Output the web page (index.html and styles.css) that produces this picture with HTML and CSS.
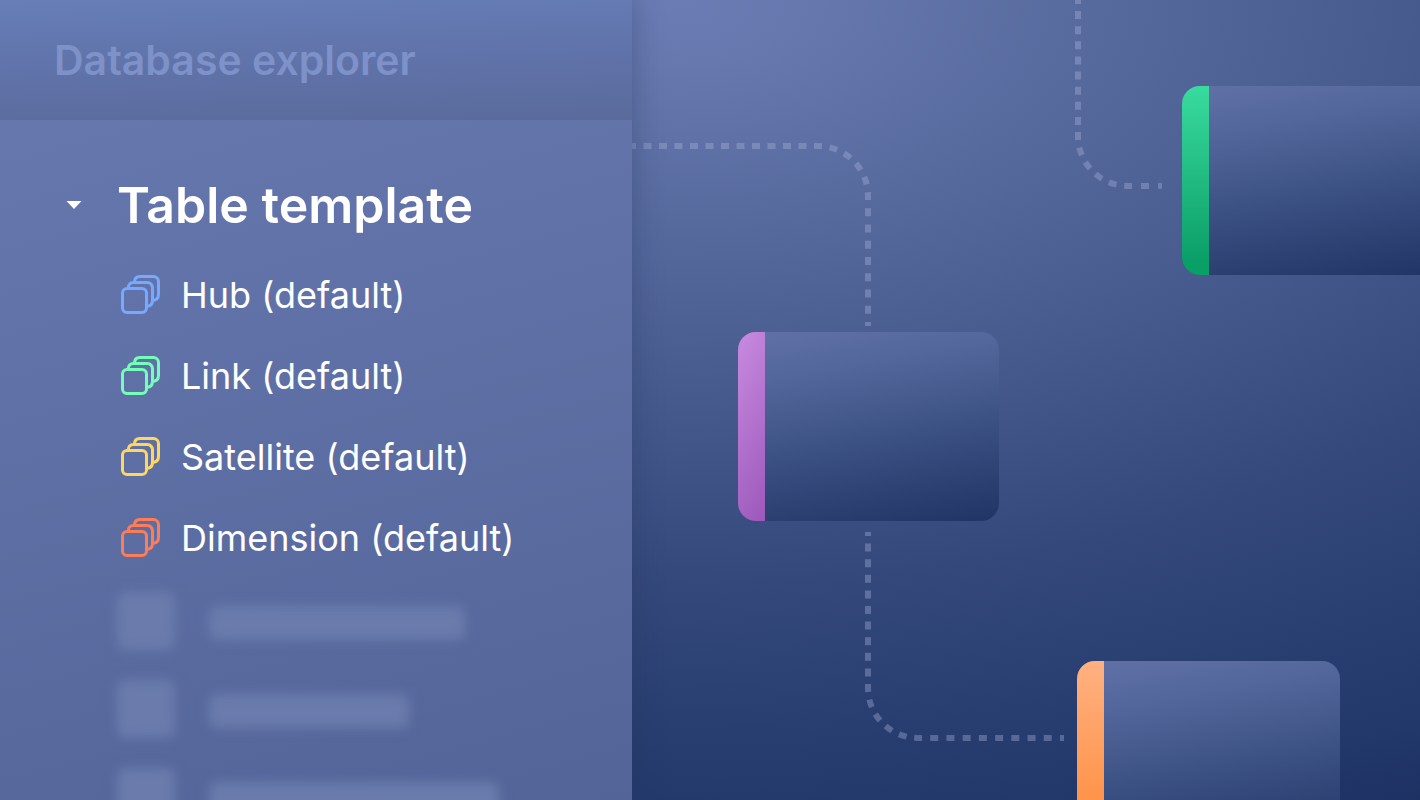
FILE: index.html
```html
<!DOCTYPE html>
<html lang="en">
<head>
<meta charset="utf-8">
<meta name="viewport" content="width=device-width, initial-scale=1">
<title>Database explorer</title>
<link rel="stylesheet" href="styles.css">
</head>
<body>
<svg class="defs" aria-hidden="true">
  <symbol id="stack" viewBox="0 0 40 40">
    <g fill="none" stroke="currentColor" stroke-width="3">
      <rect x="2.5" y="13.5" width="24" height="24" rx="4.5"/>
      <path d="M8.2 13.5C8.2 9.5 10 7.6 13.5 7.6H27.5a5 5 0 0 1 5 5V25.5C32.500 29 30.500 31.200 26.500 31.500"/>
      <path d="M14.400 7.500C14.500 3.500 16.500 1.500 19.800 1.500H33.500a5 5 0 0 1 5 5V19.500C38.500 23 36.500 25.200 32.500 25.500"/>
    </g>
  </symbol>
</svg>
<div class="app">
  <aside class="panel">
    <header class="panel-header">
      <h1 class="panel-title">Database explorer</h1>
    </header>
    <section class="group">
      <h2 class="group-title">
        <button class="group-toggle" type="button" aria-expanded="true">
          <svg class="caret" viewBox="0 0 16 8" aria-hidden="true"><path d="M0.500 0H15.500L8 8Z" fill="currentColor"/></svg>
          <span>Table template</span>
        </button>
      </h2>
      <ul class="templates">
        <li class="template"><svg class="icon hub" aria-hidden="true"><use href="#stack"/></svg><span>Hub (default)</span></li>
        <li class="template"><svg class="icon link" aria-hidden="true"><use href="#stack"/></svg><span>Link (default)</span></li>
        <li class="template"><svg class="icon satellite" aria-hidden="true"><use href="#stack"/></svg><span>Satellite (default)</span></li>
        <li class="template"><svg class="icon dimension" aria-hidden="true"><use href="#stack"/></svg><span>Dimension (default)</span></li>
      </ul>
      <div class="skeletons" aria-hidden="true">
        <div class="skeleton"><span class="block"></span><span class="bar medium"></span></div>
        <div class="skeleton"><span class="block"></span><span class="bar short"></span></div>
        <div class="skeleton"><span class="block"></span><span class="bar long"></span></div>
      </div>
    </section>
  </aside>
  <main class="canvas">
    <svg class="connectors" aria-hidden="true">
      <g fill="none" stroke="#a6b3dc" stroke-opacity="0.38" stroke-width="6" stroke-dashoffset="4">
        <path d="M0 146H186" stroke-dasharray="8 7.500"/>
        <path d="M186 146A50 50 0 0 1 236 196" stroke-dasharray="8 7.710"/>
        <path d="M236 196V326" stroke-dasharray="8 8.250"/>
        <path d="M446 0V136" stroke-dasharray="8 7.110"/>
        <path d="M446 136A50 50 0 0 0 496 186" stroke-dasharray="8 7.710"/>
        <path d="M496 186H530" stroke-dasharray="8 9"/>
        <path d="M236 532V688" stroke-dasharray="8 7.600"/>
        <path d="M236 688A50 50 0 0 0 286 738" stroke-dasharray="8 7.710"/>
        <path d="M286 738H432" stroke-dasharray="8 8.220"/>
      </g>
    </svg>
    <div class="node node-link"></div>
    <div class="node node-hub"></div>
    <div class="node node-dimension"></div>
  </main>
</div>
</body>
</html>
```

FILE: styles.css
```css
* { box-sizing: border-box; }

body {
  margin: 0;
  font-family: Inter, "Liberation Sans", sans-serif;
  color: #fff;
}

.defs { position: absolute; width: 0; height: 0; }

.app {
  display: flex;
  height: 100vh;
  overflow: hidden;
}

.panel {
  flex: 0 0 632px;
  position: relative;
  z-index: 1;
  overflow: hidden;
  background: linear-gradient(165deg, #697ab0 0%, #5f70a6 45%, #536498 100%);
  box-shadow: 0 0 28px rgba(38, 52, 96, 0.4);
}

.panel-header {
  display: flex;
  align-items: center;
  height: 120px;
  padding: 0 54px;
  background: linear-gradient(178deg, #677eb7 0%, #6073aa 50%, #5a6a9b 100%);
}

.panel-title {
  margin: 0;
  font-size: 41px;
  line-height: 48px;
  font-weight: 600;
  color: #7e91c8;
}

.group { padding: 55px 64px 0 66px; }

.group-title { margin: 0; }

.group-toggle {
  display: flex;
  align-items: center;
  gap: 35px;
  padding: 0;
  border: 0;
  background: none;
  color: inherit;
  font: inherit;
  font-size: 50px;
  line-height: 60px;
  font-weight: 600;
}

.caret { width: 16px; height: 8px; }

.templates {
  display: flex;
  flex-direction: column;
  gap: 41px;
  margin: 40px 0 0 54px;
  padding: 0;
  list-style: none;
}

.template {
  display: flex;
  align-items: center;
  gap: 21px;
  font-size: 36px;
  line-height: 40px;
  font-weight: 400;
}

.icon { width: 40px; height: 40px; }

.hub { color: #76a9ff; }
.link { color: #74ffb8; }
.satellite { color: #ffd75e; }
.dimension { color: #ff7c58; }

.skeletons {
  display: flex;
  flex-direction: column;
  gap: 30px;
  margin: 34px 0 0 51px;
}

.skeleton {
  display: flex;
  align-items: center;
  gap: 34px;
  filter: blur(6px);
}

.block,
.bar { background: #6a7bac; }

.block { width: 58px; height: 58px; border-radius: 8px; }
.bar { height: 34px; margin-top: 4px; border-radius: 8px; }
.short { width: 200px; }
.medium { width: 256px; }
.long { width: 290px; }

.canvas {
  flex: 1;
  position: relative;
  overflow: hidden;
  background: radial-gradient(222% 116% at 5% 0, #6b7cb4 0%, #6678ae 7%, #586b9f 23%, #46598d 44%, #34487b 63%, #283e70 79%, #22376a 89%, #1b2f60 100%);
}

.connectors {
  position: absolute;
  inset: 0;
  width: 100%;
  height: 100%;
}

.node {
  position: absolute;
  width: 261px;
  height: 189px;
  border-radius: 18px;
  overflow: hidden;
  background: linear-gradient(170deg, #6171a8 0%, #53679c 22%, #3d5284 55%, #203565 100%);
}

.node::before {
  content: "";
  display: block;
  width: 27px;
  height: 100%;
}

.node-link { left: 550px; top: 86px; }
.node-link::before { background: linear-gradient(#3adb9e, #0b9f68 92%); }

.node-hub { left: 106px; top: 332px; }
.node-hub::before { background: linear-gradient(120deg, #c88be0, #9c58ba); }

.node-dimension { left: 445px; top: 661px; width: 263px; }
.node-dimension::before { background: linear-gradient(#ffb181, #ff954d 70%); }
```
